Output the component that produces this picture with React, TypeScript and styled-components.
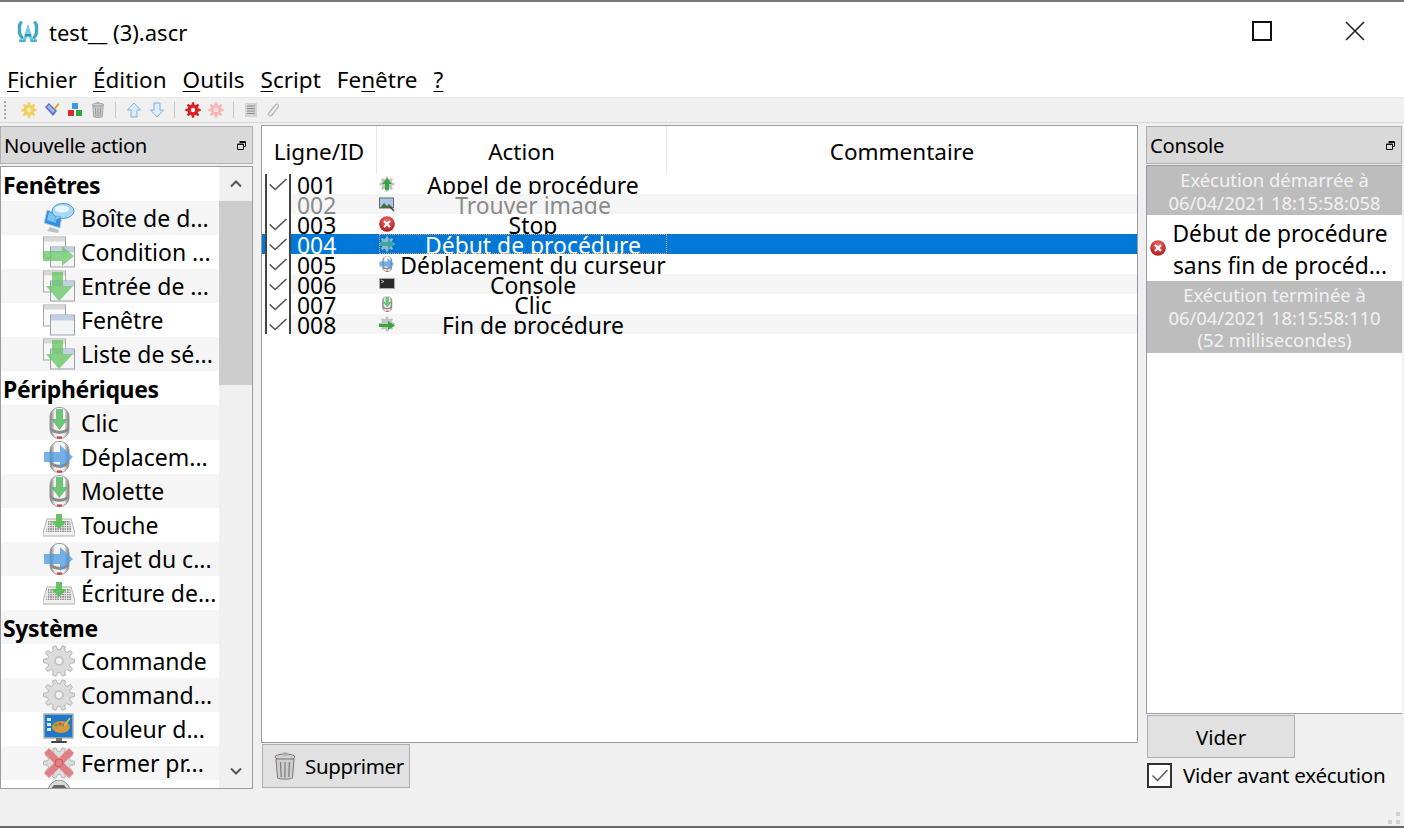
import React from "react";
import styled, { createGlobalStyle } from "styled-components";

// Shared font stack, closest installed match for Segoe UI
const FONT = `"Noto Sans", "Open Sans", "Liberation Sans", sans-serif`;

const GlobalStyle = createGlobalStyle`
  html, body { margin: 0; padding: 0; background: #f0f0f0; }
  body { font-family: ${FONT}; color: #000; }
  * { box-sizing: border-box; }
`;

const Window = styled.div`
  width: 1404px;
  height: 828px;
  display: flex;
  flex-direction: column;
  border-top: 2px solid #777;
  border-bottom: 2px solid #666;
  overflow: hidden;
  background: #f0f0f0;
`;

const TitleBar = styled.div`
  height: 58px;
  background: #fff;
  display: flex;
  align-items: center;
  padding-left: 17px;
`;

const TitleText = styled.span`
  margin-left: 10px;
  padding-top: 1px;
  font-size: 22px;
`;

const WindowButtons = styled.div`
  margin-left: auto;
  display: flex;
  padding-right: 3px;
`;

const WindowButton = styled.div`
  width: 93px;
  height: 58px;
  display: flex;
  align-items: center;
  justify-content: center;
`;

const MenuBar = styled.div`
  height: 37px;
  padding: 1px 0 0 7px;
  background: #fff;
  display: flex;
  align-items: center;
  gap: 16px;
  font-size: 22.5px;
`;

const MenuItem = styled.span`
  u { text-underline-offset: 3px; text-decoration-thickness: 1px; }
`;

const Toolbar = styled.div`
  height: 28px;
  padding-bottom: 2px;
  display: flex;
  align-items: center;
`;

const ToolbarInner = styled.div`
  width: 100%;
  height: 26px;
  display: flex;
  align-items: center;
  padding-left: 4px;
  background: #f0f0f0;
  border-top: 1px solid #e8e8e8;
  border-bottom: 1px solid #d8d8d8;
`;

const Grip = styled.div`
  width: 2px;
  height: 18px;
  margin-right: 15px;
  background: repeating-linear-gradient(to bottom, #a8a8a8 0 2px, transparent 2px 4px);
`;

const ToolGroup = styled.div`
  display: flex;
  gap: 7px;
`;

const ToolSep = styled.div`
  width: 1px;
  height: 16px;
  margin: 0 10px 0 9px;
  background: #c8c8c8;
`;

const Main = styled.div`
  height: 664px;
  display: flex;
  gap: 8px;
`;

const Dock = styled.div<{ $width: number }>`
  width: ${(p) => p.$width}px;
  display: flex;
  flex-direction: column;
  padding-top: 1px;
`;

const DockTitle = styled.div`
  height: 38px;
  flex-shrink: 0;
  background: #d9d9d9;
  border: 1px solid #b0b0b0;
  display: flex;
  align-items: center;
  justify-content: space-between;
  padding: 0 6px 0 3px;
  font-size: 20.3px;
  letter-spacing: -0.3px;
`;

const ActionBox = styled.div`
  flex: 1;
  min-height: 0;
  margin-top: 2px;
  background: #fff;
  border: 1px solid #9a9aa6;
  display: flex;
  overflow: hidden;
`;

const ActionList = styled.div`
  width: 218px;
  flex-shrink: 0;
`;

const GroupRow = styled.div<{ $alt?: boolean }>`
  height: 34px;
  padding: 2px 0 0 2px;
  display: flex;
  align-items: center;
  font-size: 23px;
  font-weight: 700;
  letter-spacing: -0.35px;
  background: ${(p) => (p.$alt ? "#f5f5f5" : "#fff")};
`;

const ActionRow = styled.div<{ $alt?: boolean; $tall?: boolean }>`
  height: ${(p) => (p.$tall ? 35 : 34)}px;
  padding-left: 42px;
  display: flex;
  align-items: center;
  gap: 6px;
  font-size: 23px;
  white-space: nowrap;
  overflow: hidden;
  background: ${(p) => (p.$alt ? "#f5f5f5" : "#fff")};
`;

const ClippedRow = styled.div`
  height: 8px;
  padding-left: 42px;
  overflow: hidden;
`;

const Scrollbar = styled.div`
  flex: 1;
  display: flex;
  flex-direction: column;
  background: #f0f0f0;
`;

const ScrollButton = styled.div`
  height: 34px;
  flex-shrink: 0;
  display: flex;
  align-items: center;
  justify-content: center;
`;

const ScrollThumb = styled.div`
  height: 184px;
  flex-shrink: 0;
  background: #cdcdcd;
`;

const ScrollSpace = styled.div`
  flex: 1;
`;

const Center = styled.div`
  width: 877px;
  display: flex;
  flex-direction: column;
`;

const TableBox = styled.div`
  height: 618px;
  background: #fff;
  border: 1px solid #9a9aa6;
  overflow: hidden;
`;

const TableHeader = styled.div`
  height: 48px;
  display: flex;
  font-size: 22.5px;
`;

const HeaderCell = styled.div<{ $width: number }>`
  width: ${(p) => p.$width}px;
  display: flex;
  align-items: center;
  justify-content: center;
  padding-top: 2px;
  border-right: 1px solid #e6e6e6;
  &:last-child { border-right: none; }
`;

const TableRow = styled.div<{ $alt?: boolean; $selected?: boolean; $muted?: boolean }>`
  height: 20px;
  display: flex;
  font-size: 22.9px;
  line-height: 20px;
  overflow: hidden;
  background: ${(p) => (p.$selected ? "#0078d7" : p.$alt ? "#f5f5f5" : "#fff")};
  color: ${(p) => (p.$selected ? "#fff" : p.$muted ? "#8a8a8a" : "#000")};
`;

const CheckCell = styled.div<{ $selected?: boolean }>`
  width: 29px;
  flex-shrink: 0;
  padding-left: 3px;
  background: ${(p) => (p.$selected ? "#0078d7" : "#fff")};
`;

const CheckInner = styled.div`
  width: 26px;
  height: 20px;
  padding: 4px 0 0 2px;
  background: #fff;
  border-left: 2px solid #444;
  border-right: 2px solid #444;
`;

const IdCell = styled.div`
  width: 86px;
  flex-shrink: 0;
  padding: 2px 0 0 6px;
`;

const ActionCell = styled.div<{ $focus?: boolean }>`
  width: 288px;
  flex-shrink: 0;
  margin-left: 2px;
  display: flex;
  outline: ${(p) => (p.$focus ? "1px dotted #e8a060" : "none")};
  outline-offset: -1px;
`;

const RowIcon = styled.div`
  width: 20px;
  height: 20px;
  padding-top: 2px;
  flex-shrink: 0;
`;

const ActionLabel = styled.div`
  flex: 1;
  padding: 2px 0 0 0;
  text-align: center;
  white-space: nowrap;
`;

const DeleteButton = styled.div`
  width: 148px;
  height: 44px;
  margin: 1px 0 0 1px;
  display: flex;
  align-items: center;
  gap: 6px;
  padding-left: 8px;
  background: #e1e1e1;
  border: 1px solid #adadad;
  font-size: 20.5px;
  letter-spacing: -0.35px;
`;

const ConsoleBox = styled.div`
  height: 549px;
  margin-top: 1px;
  flex-shrink: 0;
  background: #fff;
  border: 1px solid #9a9aa6;
  border-right: none;
`;

const ConsoleInfo = styled.div`
  padding: 3px 0 1px;
  background: #bdbdbd;
  color: #f2f2f2;
  font-size: 18.4px;
  line-height: 22.5px;
  text-align: center;
`;

const ConsoleEntry = styled.div`
  height: 66px;
  display: flex;
  align-items: center;
  padding: 0 8px 0 3px;
`;

const ConsoleText = styled.div`
  flex: 1;
  padding-top: 4px;
  font-size: 22.8px;
  line-height: 32px;
  text-align: center;
  white-space: nowrap;
`;

const ClearButton = styled.div`
  width: 148px;
  height: 44px;
  margin: 1px 0 0 1px;
  display: flex;
  align-items: center;
  justify-content: center;
  background: #e1e1e1;
  border: 1px solid #adadad;
  font-size: 20.5px;
`;

const CheckRow = styled.div`
  display: flex;
  align-items: center;
  gap: 11px;
  margin: 3px 0 0 1px;
  font-size: 20.6px;
  letter-spacing: -0.3px;
`;

const CheckBox = styled.div`
  width: 25px;
  height: 25px;
  display: flex;
  align-items: center;
  justify-content: center;
  border: 2px solid #333;
  background: #fff;
`;

const StatusBar = styled.div`
  flex: 1;
  display: flex;
  justify-content: flex-end;
  align-items: flex-end;
  padding: 0 4px 2px 0;
`;

const Ico = styled.svg`
  display: block;
  flex-shrink: 0;
`;

// Builds a toothed wheel outline for the various gear icons
const gear = (cx: number, cy: number, outer: number, inner: number, teeth: number) => {
  const pts: string[] = [];
  const step = (Math.PI * 2) / teeth;
  for (let i = 0; i < teeth; i++) {
    const a = i * step;
    const at = (r: number, d: number) =>
      `${(cx + r * Math.cos(a + d * step)).toFixed(2)},${(cy + r * Math.sin(a + d * step)).toFixed(2)}`;
    pts.push(at(inner, -0.32), at(outer, -0.18), at(outer, 0.18), at(inner, 0.32));
  }
  return `M${pts.join("L")}Z`;
};

type IconProps = { size?: number };

const Logo = () => (
  <Ico width="22" height="23" viewBox="0 0 22 23">
    <g fill="none" stroke="#45a9c6" strokeWidth="3.400" strokeLinejoin="round">
      <path d="M4.500 1.500 2.500 5v8l3 6" />
      <path d="M17.500 1.500 19.500 5v8l-3 6" />
    </g>
    <path d="M11 3.500 5.500 21h3.600L11 12l1.900 9h3.600z" fill="#74cbe0" />
    <path d="M8 14h6v2.600H8z" fill="#2f94b2" />
    <path d="M2 19.500h6.500V22H2zM13.500 19.500H20V22h-6.500z" fill="#4cb3cf" />
  </Ico>
);

const WindowStack = ({ arrow }: { arrow?: "right" | "down" }) => (
  <Ico width="32" height="32" viewBox="0 0 32 32">
    <rect x="0.500" y="1" width="22" height="21" fill="#f8f8f8" stroke="#a8a8a8" />
    <rect x="1" y="1.500" width="21" height="4" fill="#d8d8d8" />
    <rect x="7.500" y="11" width="24" height="20" fill="#f4f4f6" stroke="#9aa0aa" />
    <rect x="8" y="11.500" width="23" height="5" fill="#c3cfe4" />
    {arrow === "right" && <path d="M0 15h19v-5l12 10-12 10v-5H0z" fill="#63c55f" fillOpacity="0.72" />}
    {arrow === "down" && <path d="M9 2h11v14h10L16 31 3 16h6z" fill="#63c55f" fillOpacity="0.75" />}
  </Ico>
);

const BubbleMonitor = () => (
  <Ico width="32" height="32" viewBox="0 0 32 32">
    <path d="M4 8 19 13l-2 13L1 21z" fill="#2f8fe0" stroke="#c4ccd6" />
    <path d="M6 10 14 13l-1 8-9-3z" fill="#7cc4f4" />
    <path d="M7 25l9 3-1 3-11-2z" fill="#b8c2cc" />
    <ellipse cx="20" cy="9" rx="11" ry="7.500" fill="#a8d8f4" stroke="#4b9ad4" />
    <ellipse cx="19" cy="7" rx="7" ry="3.400" fill="#e8f7ff" />
    <path d="M14 14l-3 5 7-4z" fill="#a8d8f4" stroke="#4b9ad4" strokeWidth="0.700" />
  </Ico>
);

const Mouse = ({ blue, size = 32 }: { blue?: boolean; size?: number }) => (
  <Ico width={size} height={size} viewBox="0 0 32 32">
    <defs>
      <linearGradient id="mouseBody" x1="0" x2="1" y1="0" y2="0">
        <stop offset="0" stopColor="#777" />
        <stop offset="0.25" stopColor="#e8e8e8" />
        <stop offset="0.75" stopColor="#e8e8e8" />
        <stop offset="1" stopColor="#777" />
      </linearGradient>
    </defs>
    <rect x="7" y="0.500" width="19" height="31" rx="9" fill="url(#mouseBody)" stroke="#999" />
    <rect x="11" y="1" width="11" height="28" rx="5" fill="#f6f6f6" />
    <path d="M8 20c3 5 14 5 17 0v3c-2 5-15 5-17 0z" fill="#8a8a8a" />
    <rect x="14" y="29.500" width="5" height="2" fill="#e03a3a" />
    {blue ? (
      <path d="M1 11h16V4l13 12-13 12v-7H1z" fill="#4f9be0" fillOpacity="0.78" />
    ) : (
      <path d="M13 2h7v10h5l-8.500 11L8 12h5z" fill="#4cb957" fillOpacity="0.8" />
    )}
  </Ico>
);

const Keyboard = () => (
  <Ico width="32" height="32" viewBox="0 0 32 32">
    <defs>
      <pattern id="keys" width="2.400" height="2.400" patternUnits="userSpaceOnUse">
        <rect width="1.600" height="1.600" fill="#8c8c8c" />
      </pattern>
    </defs>
    <path d="M4 10h24l4 14v3H0v-3z" fill="#f0f0f0" stroke="#b0b0b0" />
    <path d="M5 12h22l2 11H3z" fill="url(#keys)" />
    <path d="M13 5h6v7h5l-8 8-8-8h5z" fill="#58c05a" fillOpacity="0.92" />
  </Ico>
);

const GrayGear = () => (
  <Ico width="32" height="32" viewBox="0 0 32 32">
    <path d={gear(16, 16, 15.500, 11.500, 10)} fill="#dcdcdc" stroke="#b4b4b4" />
    <circle cx="16" cy="16" r="5" fill="#c4c4c4" />
    <circle cx="16" cy="16" r="3" fill="#f4f4f4" />
  </Ico>
);

const PaletteMonitor = () => (
  <Ico width="32" height="32" viewBox="0 0 32 32">
    <rect x="1" y="1" width="29" height="24" fill="#1f78c8" stroke="#b4b4b4" strokeWidth="1.500" />
    <rect x="4" y="5" width="4" height="3" fill="#dbeaf8" />
    <rect x="4" y="10" width="4" height="3" fill="#dbeaf8" />
    <rect x="4" y="15" width="4" height="3" fill="#dbeaf8" />
    <ellipse cx="18" cy="14" rx="9" ry="6" fill="#d39a3c" />
    <circle cx="13" cy="12" r="1.500" fill="#3aa84a" />
    <circle cx="17" cy="11" r="1.500" fill="#e03a3a" />
    <circle cx="21" cy="12" r="1.500" fill="#3a6ae0" />
    <path d="M21 13 27 5" stroke="#e6c23a" strokeWidth="1.500" />
    <rect x="13" y="25" width="6" height="3" fill="#777" />
    <rect x="8" y="28" width="16" height="2" rx="1" fill="#444" />
  </Ico>
);

const GearCross = () => (
  <Ico width="32" height="32" viewBox="0 0 32 32">
    <path d={gear(16, 16, 15.500, 11.500, 10)} fill="#dcdcdc" stroke="#b4b4b4" />
    <path d="M1 6l5-5 10 10L26 1l5 5-10 10 10 10-5 5-10-10L6 31l-5-5 10-10z" fill="#e0757a" fillOpacity="0.9" />
    <circle cx="16" cy="16" r="4" fill="none" stroke="#c45c60" />
  </Ico>
);

const Dome = () => (
  <Ico width="32" height="32" viewBox="0 0 32 32">
    <path d="M16 0c5 0 9 4 11 9H5c2-5 6-9 11-9z" fill="#d8d8d8" stroke="#888" />
    <path d="M11 5h10l3 4H8z" fill="#666" />
  </Ico>
);

const ErrorDot = ({ size = 16 }: IconProps) => (
  <Ico width={size} height={size} viewBox="0 0 16 16">
    <defs>
      <radialGradient id="err" cx="50%" cy="30%" r="75%">
        <stop offset="0" stopColor="#f06a6a" />
        <stop offset="1" stopColor="#a81414" />
      </radialGradient>
    </defs>
    <circle cx="8" cy="8" r="7.800" fill="url(#err)" />
    <path d="M5 5l6 6M11 5l-6 6" stroke="#fff" strokeWidth="2.200" />
  </Ico>
);

const Trash = ({ size = 16 }: IconProps) => (
  <Ico width={size} height={size} viewBox="0 0 24 28">
    <ellipse cx="12" cy="5" rx="10" ry="3" fill="#d0d0d0" stroke="#777" />
    <rect x="9.500" y="0.500" width="5" height="3" rx="1" fill="#aaa" />
    <path d="M3 7h18l-1.500 19c-2 1.500-13 1.500-15 0z" fill="#ccd0cc" stroke="#777" />
    <path d="M7.500 10l.7 15M12 10v15.500M16.500 10l-.7 15" stroke="#808080" strokeWidth="1.300" />
  </Ico>
);

const ToolGear = ({ fill, hole }: { fill: string; hole: string }) => (
  <Ico width="16" height="16" viewBox="0 0 16 16">
    <path d={gear(8, 8, 7.800, 5.600, 8)} fill={fill} />
    <circle cx="8" cy="8" r="2.200" fill={hole} />
  </Ico>
);

const Brush = () => (
  <Ico width="16" height="16" viewBox="0 0 16 16">
    <path d="M1 5 5 1l8 8-4 5z" fill="#5b72c8" />
    <path d="M3 5l2-2 6 6-2 2z" fill="#a9b6e8" />
    <path d="M10 6l4-5 1.500 1.500L11 8z" fill="#eaa520" />
  </Ico>
);

const Blocks = () => (
  <Ico width="16" height="16" viewBox="0 0 16 16">
    <rect x="5" y="1" width="6" height="6" fill="#3a9ae8" />
    <rect x="1" y="8" width="6" height="6" fill="#d82c2c" />
    <rect x="9" y="8" width="6" height="6" fill="#2ca83c" />
  </Ico>
);

const ToolArrow = ({ down }: { down?: boolean }) => (
  <Ico width="16" height="16" viewBox="0 0 16 16">
    <path
      d={down ? "M5 1h6v7h3.500L8 15 1.500 8H5z" : "M5 15h6V8h3.500L8 1 1.500 8H5z"}
      fill="#dcecfa"
      stroke="#7fb0dc"
    />
  </Ico>
);

const Notes = () => (
  <Ico width="14" height="16" viewBox="0 0 14 16">
    <rect x="1" y="1" width="12" height="14" fill="#d4d4d4" />
    <path d="M3 4h8M3 6.500h8M3 9h8M3 11.500h8" stroke="#8c8c8c" />
  </Ico>
);

const Clip = () => (
  <Ico width="16" height="16" viewBox="0 0 16 16">
    <path
      d="M4 11 10.500 3c1.500-1.800 4-.2 2.800 1.800L7 13c-1.500 1.800-4.500.4-3.300-1.800L9 4.500"
      fill="none"
      stroke="#b8b8b8"
      strokeWidth="1.300"
    />
  </Ico>
);

const SmallGearArrow = ({ kind }: { kind: "up" | "right" | "end" }) => (
  <Ico width="16" height="16" viewBox="0 0 16 16">
    <path d={gear(8, 8, 7.600, 5.600, 8)} fill={kind === "right" ? "#8fb4d8" : "#c4c4c4"} />
    {kind === "up" && <path d="M6 14V8H3l5-6 5 6h-3v6z" fill="#36a83e" />}
    {kind === "right" && <path d="M1 6h8V3l6 5-6 5v-3H1z" fill="#3aa89a" />}
    {kind === "end" && <path d="M0 8h9V5l7 4.500L9 14v-3H0z" fill="#36a83e" />}
  </Ico>
);

const PictureSearch = () => (
  <Ico width="16" height="16" viewBox="0 0 16 16">
    <rect x="0.500" y="2" width="14" height="10" fill="#a8c8e8" stroke="#666" />
    <path d="M1 12l4-5 3 3 2-2 4 4z" fill="#4a6a4a" />
    <path d="M11 11l4 4" stroke="#444" strokeWidth="1.500" />
  </Ico>
);

const Terminal = () => (
  <Ico width="16" height="16" viewBox="0 0 16 16">
    <rect x="0.500" y="2.500" width="15" height="10" fill="#2a2a2a" stroke="#aaa" />
    <path d="M2 4l3 1.500L2 7" fill="none" stroke="#ddd" strokeWidth="0.800" />
  </Ico>
);

const Check = ({ width = 16 }: { width?: number }) => (
  <Ico width={width} height="13" viewBox="0 0 16 13" preserveAspectRatio="none">
    <path d="M.5 6.500l5 5L15.500 1" fill="none" stroke="#555" strokeWidth="1.400" />
  </Ico>
);

const FloatIcon = () => (
  <Ico width="9" height="9" viewBox="0 0 9 9">
    <path d="M2.500.5h6v5h-2M.5 3h6v5.500h-6zM.5 3.500h6M2.500 1.500h6" fill="none" stroke="#111" />
  </Ico>
);

const Chevron = ({ down }: { down?: boolean }) => (
  <Ico width="12" height="8" viewBox="0 0 12 8">
    <path d={down ? "M1 1.500 6 6.500l5-5" : "M1 6.500 6 1.500l5 5"} fill="none" stroke="#555" strokeWidth="2" />
  </Ico>
);

const SizeGrip = () => (
  <Ico width="12" height="12" viewBox="0 0 12 12">
    <path d="M8 0h4v4H8zM0 8h4v4H0zM8 8h4v4H8z" fill="#d0d0d0" />
  </Ico>
);

type Entry =
  | { group: string }
  | { label: string; icon: React.ReactNode; tall?: boolean };

const ACTIONS: Entry[] = [
  { group: "Fenêtres" },
  { label: "Boîte de d...", icon: <BubbleMonitor /> },
  { label: "Condition ...", icon: <WindowStack arrow="right" /> },
  { label: "Entrée de ...", icon: <WindowStack arrow="down" /> },
  { label: "Fenêtre", icon: <WindowStack /> },
  { label: "Liste de sé...", icon: <WindowStack arrow="down" /> },
  { group: "Périphériques" },
  { label: "Clic", icon: <Mouse />, tall: true },
  { label: "Déplacem...", icon: <Mouse blue /> },
  { label: "Molette", icon: <Mouse /> },
  { label: "Touche", icon: <Keyboard /> },
  { label: "Trajet du c...", icon: <Mouse blue /> },
  { label: "Écriture de...", icon: <Keyboard /> },
  { group: "Système" },
  { label: "Commande", icon: <GrayGear /> },
  { label: "Command...", icon: <GrayGear /> },
  { label: "Couleur d...", icon: <PaletteMonitor /> },
  { label: "Fermer pr...", icon: <GearCross /> },
];

const ROWS = [
  { id: "001", label: "Appel de procédure", icon: <SmallGearArrow kind="up" />, checked: true },
  { id: "002", label: "Trouver image", icon: <PictureSearch />, checked: false },
  { id: "003", label: "Stop", icon: <ErrorDot />, checked: true },
  { id: "004", label: "Début de procédure", icon: <SmallGearArrow kind="right" />, checked: true },
  { id: "005", label: "Déplacement du curseur", icon: <Mouse blue size={16} />, checked: true },
  { id: "006", label: "Console", icon: <Terminal />, checked: true },
  { id: "007", label: "Clic", icon: <Mouse size={16} />, checked: true },
  { id: "008", label: "Fin de procédure", icon: <SmallGearArrow kind="end" />, checked: true },
];

const App: React.FC = () => (
  <>
    <GlobalStyle />
    <Window>
      <TitleBar>
        <Logo />
        <TitleText>test__ (3).ascr</TitleText>
        <WindowButtons>
          <WindowButton>
            <Ico width="20" height="20" viewBox="0 0 20 20">
              <rect x="1" y="1" width="18" height="18" fill="none" stroke="#111" strokeWidth="2" />
            </Ico>
          </WindowButton>
          <WindowButton>
            <Ico width="20" height="20" viewBox="0 0 20 20">
              <path d="M1 1l18 18M19 1 1 19" stroke="#222" strokeWidth="1.600" />
            </Ico>
          </WindowButton>
        </WindowButtons>
      </TitleBar>

      <MenuBar>
        <MenuItem><u>F</u>ichier</MenuItem>
        <MenuItem><u>É</u>dition</MenuItem>
        <MenuItem><u>O</u>utils</MenuItem>
        <MenuItem><u>S</u>cript</MenuItem>
        <MenuItem>Fe<u>n</u>être</MenuItem>
        <MenuItem><u>?</u></MenuItem>
      </MenuBar>

      <Toolbar>
        <ToolbarInner>
          <Grip />
          <ToolGroup>
            <ToolGear fill="#f0d060" hole="#fff2b0" />
            <Brush />
            <Blocks />
            <Trash />
          </ToolGroup>
          <ToolSep />
          <ToolGroup>
            <ToolArrow />
            <ToolArrow down />
          </ToolGroup>
          <ToolSep />
          <ToolGroup>
            <ToolGear fill="#dc2020" hole="#fff" />
            <ToolGear fill="#f4b8b8" hole="#fbe0e0" />
          </ToolGroup>
          <ToolSep />
          <ToolGroup>
            <Notes />
            <Clip />
          </ToolGroup>
        </ToolbarInner>
      </Toolbar>

      <Main>
        <Dock $width={253}>
          <DockTitle>
            Nouvelle action
            <FloatIcon />
          </DockTitle>
          <ActionBox>
            <ActionList>
              {ACTIONS.map((item, i) =>
                "group" in item ? (
                  <GroupRow key={item.group} $alt={i % 2 === 1}>{item.group}</GroupRow>
                ) : (
                  <ActionRow key={item.label} $alt={i % 2 === 1} $tall={item.tall}>
                    {item.icon}
                    {item.label}
                  </ActionRow>
                )
              )}
              <ClippedRow>
                <Dome />
              </ClippedRow>
            </ActionList>
            <Scrollbar>
              <ScrollButton><Chevron /></ScrollButton>
              <ScrollThumb />
              <ScrollSpace />
              <ScrollButton><Chevron down /></ScrollButton>
            </Scrollbar>
          </ActionBox>
        </Dock>

        <Center>
          <TableBox>
            <TableHeader>
              <HeaderCell $width={115}>Ligne/ID</HeaderCell>
              <HeaderCell $width={290}>Action</HeaderCell>
              <HeaderCell $width={470}>Commentaire</HeaderCell>
            </TableHeader>
            {ROWS.map((row, i) => (
              <TableRow key={row.id} $alt={i % 2 === 1} $selected={i === 3} $muted={!row.checked}>
                <CheckCell $selected={i === 3}>
                  <CheckInner>{row.checked && <Check width={18} />}</CheckInner>
                </CheckCell>
                <IdCell>{row.id}</IdCell>
                <ActionCell $focus={i === 3}>
                  <RowIcon>{row.icon}</RowIcon>
                  <ActionLabel>{row.label}</ActionLabel>
                </ActionCell>
              </TableRow>
            ))}
          </TableBox>
          <DeleteButton>
            <Trash size={28} />
            Supprimer
          </DeleteButton>
        </Center>

        <Dock $width={256}>
          <DockTitle>
            Console
            <FloatIcon />
          </DockTitle>
          <ConsoleBox>
            <ConsoleInfo>
              Exécution démarrée à<br />06/04/2021 18:15:58:058
            </ConsoleInfo>
            <ConsoleEntry>
              <ErrorDot />
              <ConsoleText>
                Début de procédure<br />sans fin de procéd...
              </ConsoleText>
            </ConsoleEntry>
            <ConsoleInfo>
              Exécution terminée à<br />06/04/2021 18:15:58:110<br />(52 millisecondes)
            </ConsoleInfo>
          </ConsoleBox>
          <ClearButton>Vider</ClearButton>
          <CheckRow>
            <CheckBox><Check /></CheckBox>
            Vider avant exécution
          </CheckRow>
        </Dock>
      </Main>

      <StatusBar>
        <SizeGrip />
      </StatusBar>
    </Window>
  </>
);

export default App;
